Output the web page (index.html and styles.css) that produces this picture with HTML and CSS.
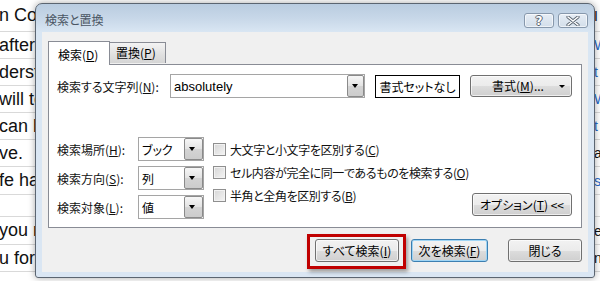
FILE: index.html
```html
<!DOCTYPE html>
<html lang="ja">
<head>
    <meta charset="UTF-8">
    <title>検索と置換</title>
    <link rel="stylesheet" href="styles.css">
</head>
<body>
    <div class="sheet">
        <div class="row h32"><span class="cell-l">n Co</span><span class="cell-r">I</span></div>
        <div class="row"><span class="cell-l">aftern</span><span class="cell-r link">W</span></div>
        <div class="row"><span class="cell-l">dersta</span><span class="cell-r link">t</span></div>
        <div class="row"><span class="cell-l">will te</span><span class="cell-r link">W</span></div>
        <div class="row"><span class="cell-l">can b</span><span class="cell-r link">t</span></div>
        <div class="row"><span class="cell-l">ve.</span><span class="cell-r">a</span></div>
        <div class="row h28"><span class="cell-l">fe ha</span><span class="cell-r link">s</span></div>
        <div class="row h22"><span class="cell-l"></span><span class="cell-r"></span></div>
        <div class="row h28"><span class="cell-l">you r</span><span class="cell-r">e</span></div>
        <div class="row"><span class="cell-l">u for</span><span class="cell-r">n</span></div>
    </div>

    <div class="dialog">
        <div class="titlebar">
            <span class="title">検索と置換</span>
            <div class="caption">
                <span class="cap cap-help">?</span>
                <span class="cap cap-close">
                    <svg width="14" height="10" viewBox="0 0 14 10">
                        <path d="M2 1 L12 9 M12 1 L2 9" stroke="#56606c" stroke-width="3.2" stroke-linecap="round"/>
                        <path d="M2 1 L12 9 M12 1 L2 9" stroke="#ffffff" stroke-width="1.6" stroke-linecap="round"/>
                    </svg>
                </span>
            </div>
        </div>

        <div class="client">
            <div class="tabs">
                <div class="tab active">検索(<u>D</u>)</div>
                <div class="tab">置換(<u>P</u>)</div>
            </div>

            <div class="panel">
                <div class="find-row">
                    <label class="lbl lbl-find">検索する文字列(<u>N</u>):</label>
                    <div class="combo combo-find">
                        <span class="combo-text latin">absolutely</span>
                        <span class="drop"></span>
                    </div>
                    <div class="preview">書式セットなし</div>
                    <button class="btn btn-format">書式(<u>M</u>)...<span class="caret"></span></button>
                </div>

                <div class="opts">
                    <div class="fields">
                        <label class="lbl">検索場所(<u>H</u>):</label>
                        <div class="combo"><span class="combo-text">ブック</span><span class="drop"></span></div>
                        <label class="lbl">検索方向(<u>S</u>):</label>
                        <div class="combo"><span class="combo-text">列</span><span class="drop"></span></div>
                        <label class="lbl">検索対象(<u>L</u>):</label>
                        <div class="combo"><span class="combo-text">値</span><span class="drop"></span></div>
                    </div>

                    <div class="checks">
                        <div class="check"><span class="box"></span>大文字と小文字を区別する(<u>C</u>)</div>
                        <div class="check"><span class="box"></span>セル内容が完全に同一であるものを検索する(<u>O</u>)</div>
                        <div class="check"><span class="box"></span>半角と全角を区別する(<u>B</u>)</div>
                    </div>

                    <button class="btn btn-options">オプション(<u>T</u>) &lt;&lt;</button>
                </div>
            </div>

            <div class="actions">
                <button class="btn btn-all">すべて検索(<u>I</u>)</button>
                <button class="btn btn-next">次を検索(<u>F</u>)</button>
                <button class="btn btn-close">閉じる</button>
            </div>
        </div>
    </div>
</body>
</html>
```

FILE: styles.css
```css
body {
    margin: 0;
    width: 600px;
    height: 281px;
    overflow: hidden;
    position: relative;
    background: #ffffff;
    font-family: "Noto Sans CJK JP", sans-serif;
}

/* spreadsheet behind the dialog */
.sheet {
    display: flex;
    flex-direction: column;
    height: 281px;
    overflow: hidden;
}
.row {
    flex: none;
    display: flex;
    justify-content: space-between;
    align-items: center;
    height: 27px;
    border-bottom: 1px solid #d9d9d9;
    box-sizing: border-box;
    font-family: "Liberation Sans", Arial, sans-serif;
    font-size: 18px;
    color: #111;
}
.h32 { height: 32px; }
.h28 { height: 28px; }
.h22 { height: 22px; }
.cell-l {
    white-space: nowrap;
    margin-left: -1px;
}
.cell-r {
    width: 6px;
    white-space: nowrap;
    font-size: 14px;
}
.link { color: #2a6ac8; }

/* dialog window */
.dialog {
    position: absolute;
    left: 35px;
    top: 3px;
    width: 560px;
    height: 275px;
    box-sizing: border-box;
    border: 1px solid #5b6571;
    border-radius: 7px 7px 3px 3px;
    background: linear-gradient(to bottom, #b9cce0 0, #c7d7e8 14px, #d9e6f3 28px, #dae6f3 100%);
    box-shadow: 0 0 7px rgba(0, 0, 0, 0.35);
    padding: 0 6px 5px 6px;
    display: flex;
    flex-direction: column;
    font-feature-settings: "palt";
}
.titlebar {
    height: 28px;
    display: flex;
    justify-content: space-between;
    align-items: flex-start;
}
.title {
    font-size: 12px;
    line-height: 12px;
    color: #4a5563;
    margin: 10px 0 0 3px;
}
.caption {
    display: flex;
    gap: 4px;
    margin-top: 9px;
}
.cap {
    width: 30px;
    height: 15px;
    box-sizing: border-box;
    border: 1px solid #8798ac;
    border-radius: 3px;
    background: linear-gradient(to bottom, #e6edf5, #d3deea);
    box-shadow: inset 0 0 0 1px rgba(255, 255, 255, 0.6);
    display: flex;
    align-items: center;
    justify-content: center;
}
.cap-help {
    font-family: "DejaVu Sans", sans-serif;
    font-weight: bold;
    font-size: 12px;
    line-height: 12px;
    color: #ffffff;
    text-shadow: 1px 0 #5a6470, -1px 0 #5a6470, 0 1px #5a6470, 0 -1px #5a6470;
}

.client {
    flex: 1;
    background: #f0f0f0;
    display: flex;
    flex-direction: column;
    font-size: 12px;
    color: #000;
}

/* tabs */
.tabs {
    display: flex;
    align-items: flex-end;
    margin: 9px 0 0 6px;
    height: 23px;
    position: relative;
    z-index: 1;
}
.tab {
    height: 21px;
    box-sizing: border-box;
    padding: 0 8px;
    border: 1px solid #898c95;
    border-bottom: none;
    background: linear-gradient(to bottom, #f3f3f3, #e0e0e0 60%, #d5d5d5);
    line-height: 20px;
    margin-bottom: 1px;
}
.tab.active {
    width: 62px;
    height: 24px;
    padding-left: 9px;
    background: #ffffff;
    line-height: 25px;
    margin-bottom: -1px;
}
.tab:not(.active) {
    width: 56px;
    border-left: none;
    padding-left: 6px;
}

.panel {
    margin: 0 6px;
    height: 164px;
    box-sizing: border-box;
    border: 1px solid #898c95;
    background: #ffffff;
    padding: 9px 9px 0 8px;
}

.lbl {
    color: #111;
    white-space: nowrap;
}

/* combo boxes */
.combo {
    height: 24px;
    box-sizing: border-box;
    border: 1px solid #a5a5a5;
    background: #ffffff;
    display: flex;
    align-items: center;
    justify-content: space-between;
}
.combo-text {
    padding-left: 3px;
}
.latin {
    font-family: "Liberation Sans", Arial, sans-serif;
    font-size: 13px;
    padding-left: 3px;
}
.drop {
    width: 17px;
    height: 22px;
    box-sizing: border-box;
    border: 1px solid #8a8a8a;
    border-radius: 2px;
    background: linear-gradient(to bottom, #f6f6f6, #e3e3e3 50%, #d4d4d4 51%, #cccccc);
    position: relative;
}
.drop::after {
    content: "";
    position: absolute;
    left: 4px;
    top: 8px;
    border-left: 3.5px solid transparent;
    border-right: 3.5px solid transparent;
    border-top: 4px solid #000;
}

.find-row {
    display: flex;
    align-items: center;
}
.lbl-find {
    width: 113px;
}
.combo-find {
    width: 195px;
}
.preview {
    width: 85px;
    height: 23px;
    box-sizing: border-box;
    margin-left: 10px;
    border: 1px solid #000;
    display: flex;
    align-items: center;
    justify-content: center;
}

/* buttons */
.btn {
    font: 12px/1 "Noto Sans CJK JP", sans-serif;
    font-feature-settings: "palt";
    color: #000;
    height: 23px;
    box-sizing: border-box;
    border: 1px solid #707070;
    border-radius: 3px;
    background: linear-gradient(to bottom, #f2f2f2 0%, #ebebeb 50%, #dddddd 51%, #cfcfcf 100%);
    box-shadow: inset 0 0 0 1px rgba(255, 255, 255, 0.65);
    padding: 0;
    display: flex;
    align-items: center;
    justify-content: center;
}
.btn-format {
    width: 102px;
    height: 22px;
    margin-left: 10px;
    position: relative;
    padding-right: 6px;
}
.caret {
    position: absolute;
    right: 6px;
    top: 9px;
    border-left: 3px solid transparent;
    border-right: 3px solid transparent;
    border-top: 3px solid #000;
}

.opts {
    display: flex;
    margin-top: 39px;
}
.fields {
    flex: none;
    display: grid;
    grid-template-columns: 81px 66px;
    grid-auto-rows: 24px;
    row-gap: 5px;
    align-items: center;
}
.fields .combo .drop {
    width: 19px;
}
.checks {
    flex: none;
    display: flex;
    flex-direction: column;
    margin: 1px 0 0 9px;
}
.check {
    height: 23px;
    display: flex;
    align-items: center;
    white-space: nowrap;
    letter-spacing: -0.4px;
    color: #111;
}
.box {
    flex: none;
    width: 13px;
    height: 13px;
    box-sizing: border-box;
    border: 1px solid #8f8f8f;
    background: linear-gradient(135deg, #d6d6d6, #f4f4f4);
    box-shadow: inset 0 0 0 1px #f2f2f2;
    margin-right: 4px;
}
.btn-options {
    flex: none;
    width: 100px;
    margin-left: auto;
    align-self: flex-end;
    margin-bottom: 3px;
}

/* bottom actions */
.actions {
    display: flex;
    justify-content: flex-end;
    margin: 11px 6px 0 0;
}
.btn-all {
    width: 84px;
    position: relative;
}
.btn-all::after {
    content: "";
    position: absolute;
    left: -9px;
    top: -6px;
    right: -8px;
    bottom: -8px;
    border: 3px solid #c00000;
    box-shadow: 2px 3px 4px rgba(0, 0, 0, 0.35);
}
.btn-next {
    width: 77px;
    margin-left: 12px;
    border-color: #3c7fb1;
    box-shadow: inset 0 0 0 1px #9fd5f5;
}
.btn-close {
    width: 74px;
    margin-left: 20px;
}
```
